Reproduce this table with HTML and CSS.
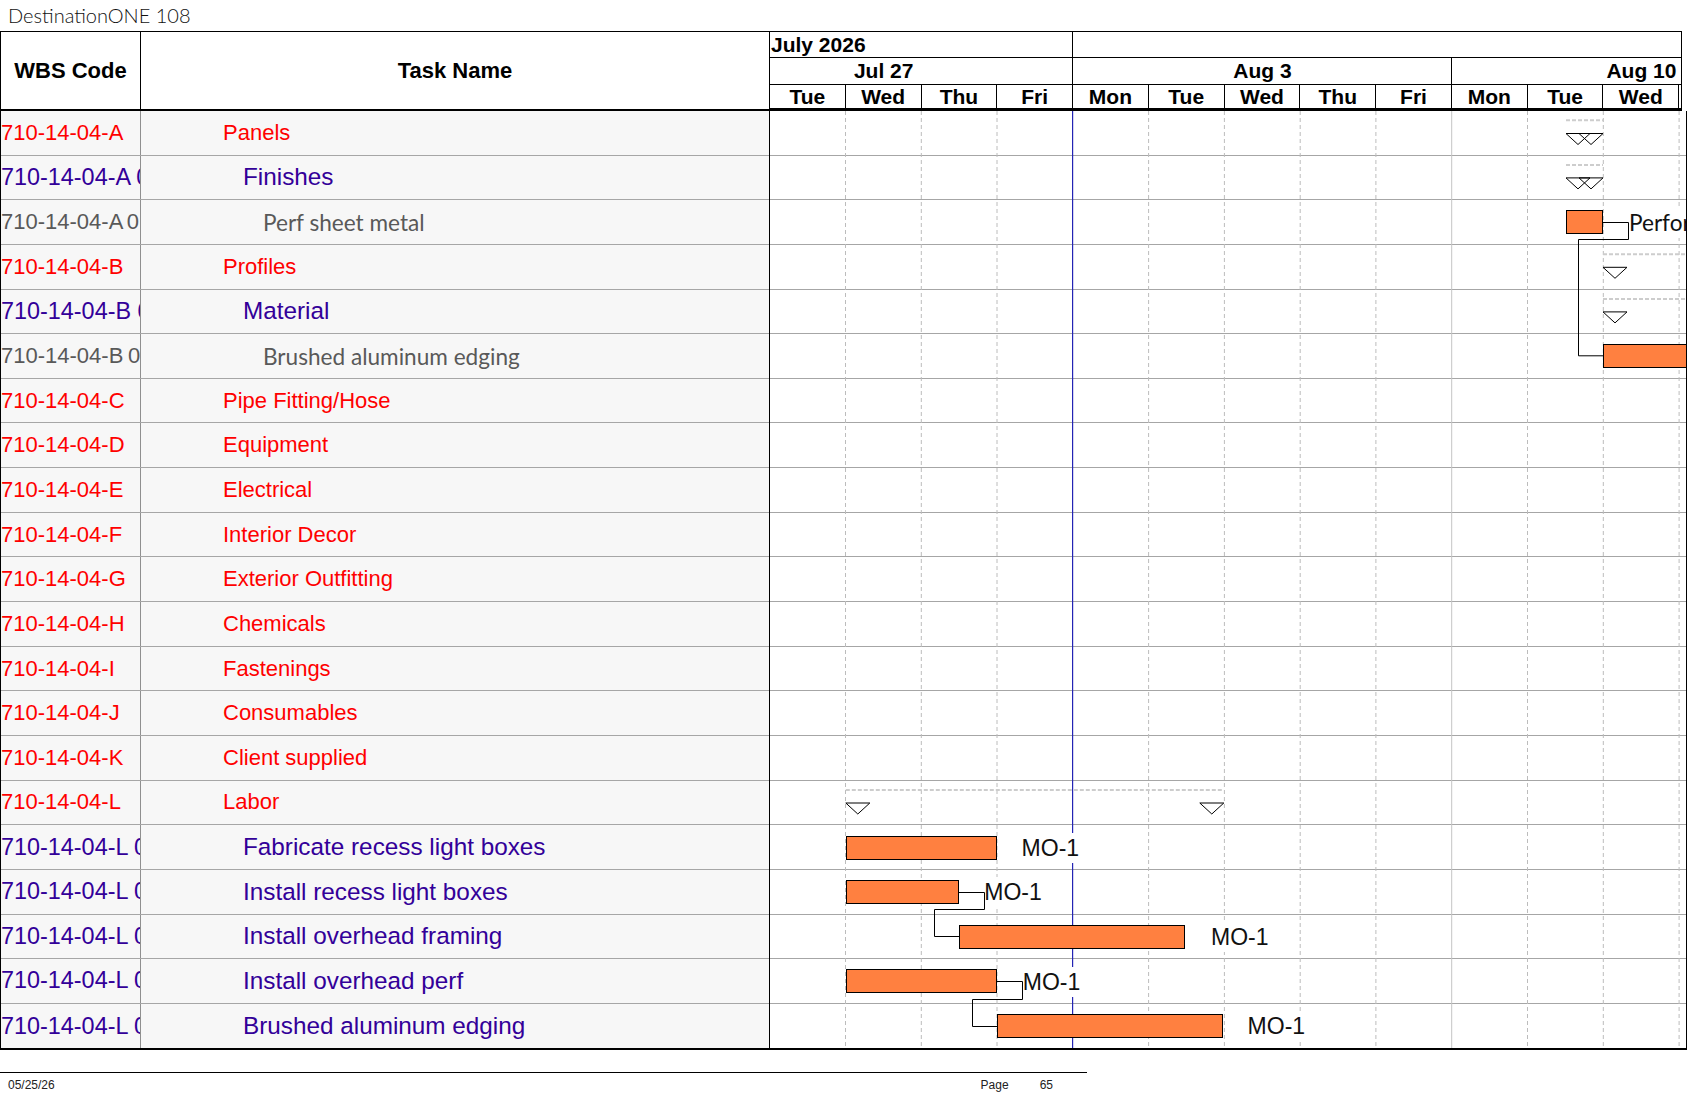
FILE: index.html
```html
<!DOCTYPE html>
<html>
<head>
<meta charset="utf-8">
<link rel="stylesheet" href="styles.css">
</head>
<body>
<div class="title">DestinationONE 108</div>
<div class="sheet">
  <div class="left">
    <div class="lhead"><div class="hwbs">WBS Code</div><div class="htask">Task Name</div></div>
    <div class="lbody">
      <div class="row l1"><div class="wbs">710-14-04-A</div><div class="task">Panels</div></div>
      <div class="row l2"><div class="wbs">710-14-04-A 01</div><div class="task">Finishes</div></div>
      <div class="row l3"><div class="wbs">710-14-04-A 01 01</div><div class="task">Perf sheet metal</div></div>
      <div class="row l1"><div class="wbs">710-14-04-B</div><div class="task">Profiles</div></div>
      <div class="row l2"><div class="wbs">710-14-04-B 01</div><div class="task">Material</div></div>
      <div class="row l3"><div class="wbs">710-14-04-B 01 01</div><div class="task">Brushed aluminum edging</div></div>
      <div class="row l1"><div class="wbs">710-14-04-C</div><div class="task">Pipe Fitting/Hose</div></div>
      <div class="row l1"><div class="wbs">710-14-04-D</div><div class="task">Equipment</div></div>
      <div class="row l1"><div class="wbs">710-14-04-E</div><div class="task">Electrical</div></div>
      <div class="row l1"><div class="wbs">710-14-04-F</div><div class="task">Interior Decor</div></div>
      <div class="row l1"><div class="wbs">710-14-04-G</div><div class="task">Exterior Outfitting</div></div>
      <div class="row l1"><div class="wbs">710-14-04-H</div><div class="task">Chemicals</div></div>
      <div class="row l1"><div class="wbs">710-14-04-I</div><div class="task">Fastenings</div></div>
      <div class="row l1"><div class="wbs">710-14-04-J</div><div class="task">Consumables</div></div>
      <div class="row l1"><div class="wbs">710-14-04-K</div><div class="task">Client supplied</div></div>
      <div class="row l1"><div class="wbs">710-14-04-L</div><div class="task">Labor</div></div>
      <div class="row l2"><div class="wbs">710-14-04-L 01</div><div class="task">Fabricate recess light boxes</div></div>
      <div class="row l2"><div class="wbs">710-14-04-L 02</div><div class="task">Install recess light boxes</div></div>
      <div class="row l2"><div class="wbs">710-14-04-L 03</div><div class="task">Install overhead framing</div></div>
      <div class="row l2"><div class="wbs">710-14-04-L 04</div><div class="task">Install overhead perf</div></div>
      <div class="row l2 last"><div class="wbs">710-14-04-L 05</div><div class="task">Brushed aluminum edging</div></div>
    </div>
  </div>
  <div class="chart">
    <div class="chead">
      <div class="mrow"><div class="mcell first">July 2026</div><div class="mcell rest"></div></div>
      <div class="wrow">
        <div class="wcell w1"><span class="wlbl shift">Jul 27</span></div>
        <div class="wcell w2"><span class="wlbl">Aug 3</span></div>
        <div class="wcell w3"><span class="wlbl">Aug 10</span></div>
      </div>
      <div class="drow">
        <div class="day">Tue</div><div class="day">Wed</div><div class="day">Thu</div><div class="day">Fri</div>
        <div class="day">Mon</div><div class="day">Tue</div><div class="day">Wed</div><div class="day">Thu</div><div class="day">Fri</div>
        <div class="day">Mon</div><div class="day">Tue</div><div class="day">Wed</div><div class="day tail"></div>
      </div>
    </div>
    <div class="cbody">
      <div class="crow"></div><div class="crow"></div><div class="crow"></div><div class="crow"></div><div class="crow"></div>
      <div class="crow"></div><div class="crow"></div><div class="crow"></div><div class="crow"></div><div class="crow"></div>
      <div class="crow"></div><div class="crow"></div><div class="crow"></div><div class="crow"></div><div class="crow"></div>
      <div class="crow"></div><div class="crow"></div><div class="crow"></div><div class="crow"></div><div class="crow"></div>
      <div class="crow last"></div>
      <div class="overlay">
        <svg class="lines" width="916" height="938" viewBox="0 0 916 938">
          <g stroke="#bcbcbc" stroke-width="1" stroke-dasharray="4 3">
            <line x1="75.5" y1="0" x2="75.5" y2="938"/>
            <line x1="151.3" y1="0" x2="151.3" y2="938"/>
            <line x1="227" y1="0" x2="227" y2="938"/>
            <line x1="378.6" y1="0" x2="378.6" y2="938"/>
            <line x1="454.4" y1="0" x2="454.4" y2="938"/>
            <line x1="530.2" y1="0" x2="530.2" y2="938"/>
            <line x1="605.9" y1="0" x2="605.9" y2="938"/>
            <line x1="757.5" y1="0" x2="757.5" y2="938"/>
            <line x1="833.3" y1="0" x2="833.3" y2="938"/>
            <line x1="909.1" y1="0" x2="909.1" y2="938"/>
          </g>
          <line x1="681.7" y1="0" x2="681.7" y2="938" stroke="#c4c4c4" stroke-width="1"/>
          <line x1="302.6" y1="0" x2="302.6" y2="938" stroke="#2424b4" stroke-width="1.2"/>
          <g stroke="#cdcdcd" stroke-width="2" stroke-dasharray="4 2">
            <line x1="796" y1="9.3" x2="833" y2="9.3"/>
            <line x1="796" y1="54" x2="833" y2="54"/>
            <line x1="833" y1="143.3" x2="916" y2="143.3"/>
            <line x1="833" y1="187.9" x2="916" y2="187.9"/>
            <line x1="75.8" y1="679" x2="453.8" y2="679"/>
          </g>
        </svg>
        <div class="lbl perf" style="left:859px;top:96.5px">Perforated sheet metal</div>
        <div class="lbl" style="left:251.6px;top:721.5px">MO-1</div>
        <div class="lbl" style="left:214.3px;top:766px">MO-1</div>
        <div class="lbl" style="left:441px;top:810.5px">MO-1</div>
        <div class="lbl" style="left:252.8px;top:855.5px">MO-1</div>
        <div class="lbl" style="left:477.6px;top:900px">MO-1</div>
        <div class="bar" style="left:795.7px;top:99.3px;width:37.3px"></div>
        <div class="bar" style="left:833px;top:232.8px;width:200px"></div>
        <div class="bar" style="left:75.7px;top:724.5px;width:151.3px"></div>
        <div class="bar" style="left:75.7px;top:769.3px;width:113.3px"></div>
        <div class="bar" style="left:189.3px;top:813.5px;width:226px"></div>
        <div class="bar" style="left:75.7px;top:858.3px;width:151.3px"></div>
        <div class="bar" style="left:227.3px;top:903px;width:226px"></div>
        <svg class="lines" width="916" height="938" viewBox="0 0 916 938">
          <g fill="none" stroke="#000" stroke-width="1">
            <polygon points="796,22.5 820,22.5 808,33.5"/>
            <polygon points="809,22.5 833,22.5 821,33.5"/>
            <polygon points="796,66.9 820,66.9 808,77.9"/>
            <polygon points="809,66.9 833,66.9 821,77.9"/>
            <polygon points="833,156.3 857,156.3 845,167.3"/>
            <polygon points="833,200.9 857,200.9 845,211.9"/>
            <polygon points="75.8,692 99.8,692 87.8,703"/>
            <polygon points="429.8,692 453.8,692 441.8,703"/>
            <polyline points="833,111.5 858.5,111.5 858.5,128.5 808.5,128.5 808.5,244.8 833,244.8"/>
            <polyline points="188.7,781.5 214.5,781.5 214.5,798.5 164.5,798.5 164.5,825.5 189.3,825.5"/>
            <polyline points="227,870.5 252.5,870.5 252.5,888.5 202.5,888.5 202.5,915.5 227.3,915.5"/>
          </g>
        </svg>
      </div>
    </div>
  </div>
</div>
<div class="footer"><span class="fdate">05/25/26</span><span class="fpage">Page</span><span class="fnum">65</span></div>
</body>
</html>
```

FILE: styles.css
```css
* { box-sizing: border-box; }
body {
  margin: 0;
  background: #fff;
  font-family: "Liberation Sans", Arial, sans-serif;
  color: #000;
  width: 1687px;
  height: 1097px;
  overflow: hidden;
}
.title {
  height: 31px;
  padding-left: 8px;
  font-family: Lato, "Liberation Sans", sans-serif;
  font-weight: 300;
  font-size: 20px;
  line-height: 31px;
  color: #111;
}
.sheet { display: flex; width: 1687px; }
.left {
  width: 769px;
  border-left: 1px solid #000;
}
.lhead {
  height: 80px;
  display: flex;
  border-top: 1px solid #000;
  border-bottom: 2px solid #000;
}
.hwbs, .htask {
  display: flex;
  align-items: center;
  justify-content: center;
  font-weight: bold;
  font-size: 22px;
}
.hwbs { width: 140px; border-right: 1px solid #000; }
.htask { flex: 1; }
.lbody { border-bottom: 2px solid #000; }
.row {
  display: flex;
  height: 44.65px;
  border-bottom: 1px solid #a6a6a6;
  background: #f7f7f7;
  white-space: nowrap;
}
.row.last { border-bottom: none; }
.wbs {
  width: 140px;
  flex: none;
  border-right: 1px solid #8f8f8f;
  overflow: hidden;
  display: flex;
  align-items: center;
}
.task {
  flex: 1;
  overflow: hidden;
  display: flex;
  align-items: center;
}
.l1 { color: #f00; font-size: 22px; }
.l1 .task { padding-left: 82px; }
.l2 { color: #330099; font-size: 24.3px; }
.l2 .wbs { font-size: 23.4px; }
.l2 .task { padding-left: 102px; }
.l3 { color: #595959; font-size: 22px; }
.l3 .wbs { word-spacing: -1.5px; }
.l3 .task { padding-left: 122px; font-family: Lato, "Liberation Sans", sans-serif; font-size: 22.6px; }

.chart { width: 918px; }
.chead {
  width: 913px;
  border-top: 1px solid #000;
  border-left: 1px solid #000;
  border-right: 1px solid #000;
  font-weight: bold;
  font-size: 21px;
}
.mrow { display: flex; height: 26px; border-bottom: 1px solid #000; }
.mcell.first { width: 303.1px; border-right: 1px solid #000; line-height: 25px; padding-left: 1px; }
.mcell.rest { flex: 1; }
.wrow { display: flex; height: 27px; border-bottom: 1px solid #000; }
.wcell { overflow: hidden; display: flex; border-right: 1px solid #000; }
.w1 { width: 303.1px; }
.w2 { width: 378.9px; }
.w3 { flex: 1; border-right: none; }
.wlbl { flex: none; width: 378.9px; text-align: center; line-height: 26px; }
.wlbl.shift { margin-left: -75.78px; }
.drow {
  display: grid;
  grid-template-columns: repeat(12, 75.78px) 1fr;
  height: 26px;
  border-bottom: 3px solid #000;
}
.day { border-right: 1px solid #000; text-align: center; line-height: 23px; }
.day.tail { border-right: none; }

.cbody {
  position: relative;
  width: 918px;
  border-left: 1px solid #000;
  border-right: 1px solid #000;
  border-bottom: 2px solid #000;
  background: #fff;
}
.crow { height: 44.65px; border-bottom: 1px solid #a6a6a6; }
.crow.last { border-bottom: none; }
.overlay { position: absolute; left: 0; top: 0; right: 0; bottom: 0; overflow: hidden; }
.lines { position: absolute; left: 0; top: 0; }
.bar {
  position: absolute;
  height: 24px;
  background: #ff8040;
  border: 1px solid #000;
}
.lbl {
  position: absolute;
  font-family: "Liberation Sans", Arial, sans-serif;
  font-size: 23px;
  line-height: 30px;
  padding-left: 1px;
  margin-left: -1px;
  color: #111;
  background: #fff;
  white-space: nowrap;
}
.lbl.perf { font-family: Lato, "Liberation Sans", sans-serif; font-size: 22.6px; }

.footer {
  width: 1087px;
  margin-top: 22px;
  border-top: 1.5px solid #000;
  display: flex;
  font-size: 12px;
  line-height: 14px;
  padding-top: 5px;
  color: #222;
}
.fdate { margin-left: 8px; }
.fpage { margin-left: auto; }
.fnum { margin-left: 31px; margin-right: 34px; }
```
